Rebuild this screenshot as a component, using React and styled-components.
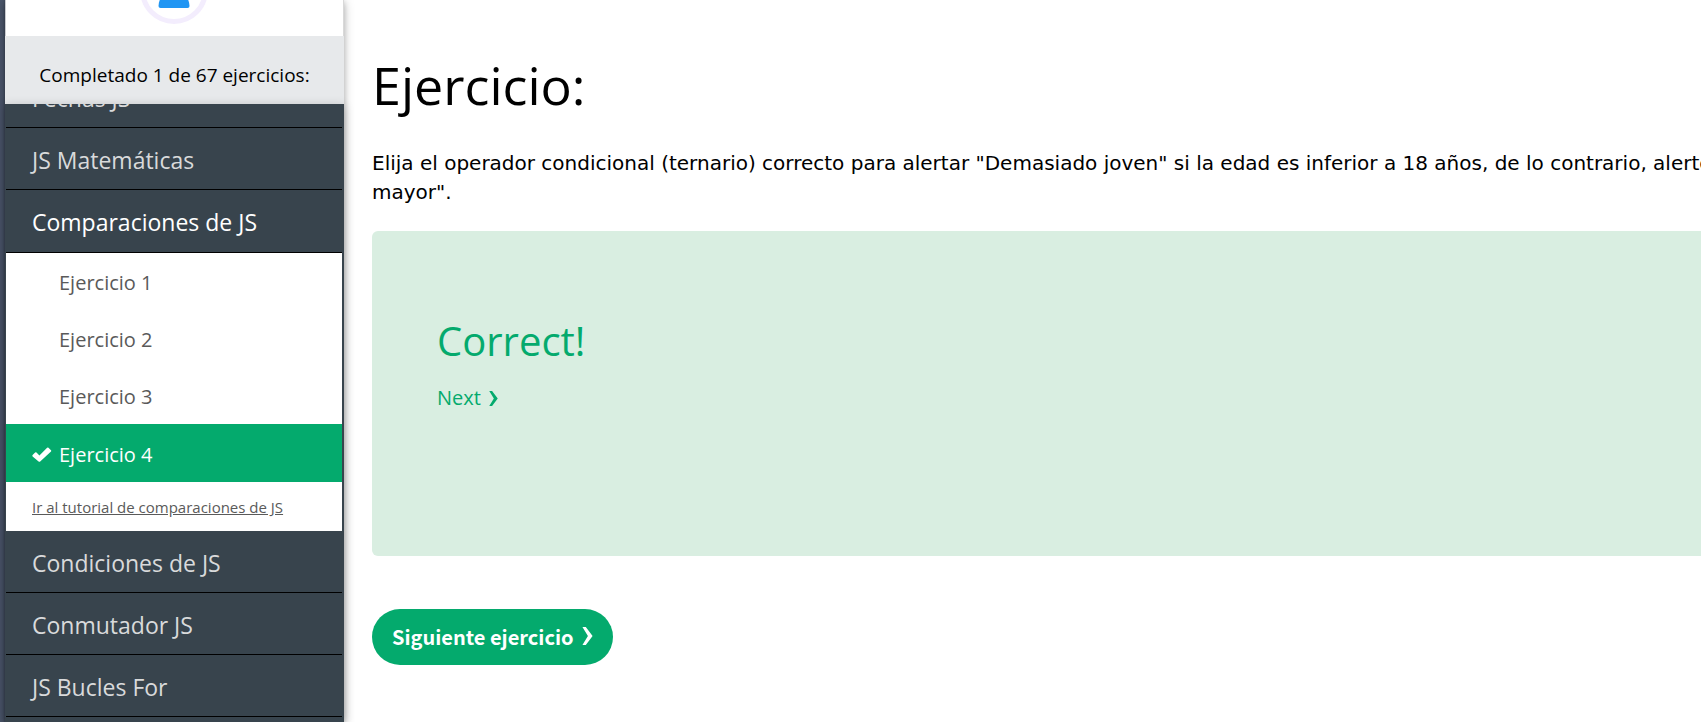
import React from "react";
import styled, { createGlobalStyle, css } from "styled-components";

const ui = '"Open Sans", "Noto Sans", sans-serif';
const green = "#04aa6d";
const slate = "#38444d";

const GlobalStyle = createGlobalStyle`
  *, *::before, *::after { box-sizing: border-box; }
  html, body, #root { height: 100%; }
  body {
    margin: 0;
    background: #fff;
    color: #000;
    font-family: ${ui};
    overflow: hidden;
  }
`;

const Page = styled.div`
  display: flex;
  height: 100%;
  overflow: hidden;
`;

const Edge = styled.div`
  flex: none;
  width: 5px;
  background: linear-gradient(90deg, #4b566b 60%, #434d60);
`;

const Sidebar = styled.aside`
  flex: none;
  display: flex;
  flex-direction: column;
  width: 339px;
  box-shadow: 0 2px 10px rgba(0, 0, 0, 0.26), 0 2px 5px rgba(0, 0, 0, 0.16);
`;

const Profile = styled.div`
  display: flex;
  flex: none;
  justify-content: center;
  align-items: flex-end;
  height: 36px;
  padding: 0 2px 12px 0;
  overflow: hidden;
  border-left: 1px solid #c9cbd0;
  border-right: 1px solid #d9d9d9;
  background: #fff;
`;

const Progress = styled.div`
  flex: none;
  height: 68px;
  padding-top: 23px;
  background: #e7e9eb;
  font-size: 19px;
  line-height: 32px;
  text-align: center;
`;

const Menu = styled.nav`
  flex: 1;
  min-height: 0;
  overflow: hidden;
  padding: 0 2px 0 1px;
  background: ${slate};
  box-shadow: 0 2px 10px rgba(0, 0, 0, 0.2);
`;

/* The list is scrolled part of the way into its first entry. */
const Topics = styled.ul`
  margin: -38px 0 0;
  padding: 0;
  list-style: none;
`;

const Topic = styled.a`
  display: block;
  height: ${(p) => (p.$open ? 63 : 62)}px;
  padding: 16px 26px 0;
  border-bottom: 1px solid #000;
  color: ${(p) => (p.$open ? "#fff" : "#d9dadb")};
  font-size: 23px;
  line-height: 32px;
  text-decoration: none;
`;

const Exercises = styled.ul`
  margin: 0;
  padding: 0;
  background: #fff;
  list-style: none;
`;

const Exercise = styled.a`
  display: flex;
  align-items: center;
  height: 57px;
  padding: 2px 26px 0;
  color: #5a5a5a;
  font-size: 20px;
  text-decoration: none;
  ${(p) =>
    p.$active &&
    css`
      height: 58px;
      background: ${green};
      color: #fff;
    `}
`;

const Mark = styled.span`
  display: flex;
  flex: none;
  width: 27px;
`;

const TutorialLink = styled.a`
  display: block;
  height: 49px;
  padding: 13px 26px 0;
  color: #5a5a5a;
  font-size: 15px;
  line-height: 24px;
`;

const Main = styled.main`
  flex: 1;
  min-width: 0;
  overflow: hidden;
  padding: 47px 0 0 28px;
`;

/* Wider than the window: the content runs on past the right edge. */
const Content = styled.div`
  width: calc(100% + 180px);
`;

const Title = styled.h1`
  margin: 0 0 26px;
  font-size: 52px;
  font-weight: 400;
  line-height: 76px;
`;

const Task = styled.p`
  margin: 0 0 24px;
  font-family: "DejaVu Sans", sans-serif;
  font-size: 20px;
  line-height: 29px;
`;

const Result = styled.section`
  height: 325px;
  padding: 82px 65px 0;
  border-radius: 6px;
  background: #d9eee1;
  color: ${green};
`;

const Verdict = styled.h2`
  margin: 0 0 13px;
  font-size: 40px;
  font-weight: 400;
  line-height: 56px;
`;

const NextLink = styled.a`
  display: inline-flex;
  align-items: center;
  gap: 8px;
  color: ${green};
  font-size: 20px;
  line-height: 32px;
  text-decoration: none;
`;

const NextButton = styled.button`
  display: inline-flex;
  align-items: center;
  gap: 8px;
  height: 56px;
  margin-top: 53px;
  padding: 0 20px 2px;
  border: 0;
  border-radius: 28px;
  background: ${green};
  color: #fff;
  font-family: "Noto Sans CJK SC", ${ui};
  font-size: 20px;
  font-weight: 700;
`;

const Chevron = ({ width, height }) => (
  <svg width={width} height={height} viewBox="0 0 10 17" fill="currentColor" aria-hidden="true">
    <path d="M0.2 0H3.4L9.8 8.5L3.4 17H0.2L5.4 8.5Z" />
  </svg>
);

const Check = () => (
  <svg width="20" height="15" viewBox="0 0 20 15" aria-hidden="true">
    <path
      d="M0.6 8.1L3.1 5.6Q3.8 5 4.5 5.6L7.4 8.5L15.1 0.8Q15.8 0.1 16.5 0.8L19 3.2Q19.6 3.9 19 4.6L8.2 14.4Q7.4 15 6.6 14.4L0.6 9.4Q0 8.8 0.6 8.1Z"
      fill="currentColor"
    />
  </svg>
);

const Avatar = () => (
  <svg width="68" height="68" viewBox="0 0 68 68" aria-hidden="true">
    <circle cx="34" cy="34" r="31.5" fill="#fff" stroke="#f3edfd" strokeWidth="5" />
    <circle cx="34" cy="22" r="11" fill="#2196f3" />
    <path d="M18.5 50C19 42 23 36 34 36S49 42 49.5 50Q49.5 52 47.5 52H20.5Q18.5 52 18.5 50Z" fill="#2196f3" />
  </svg>
);

const exercises = ["Ejercicio 1", "Ejercicio 2", "Ejercicio 3", "Ejercicio 4"];

export default function App() {
  return (
    <Page>
      <GlobalStyle />
      <Edge />
      <Sidebar>
        <Profile>
          <Avatar />
        </Profile>
        <Progress>Completado 1 de 67 ejercicios:</Progress>
        <Menu>
          <Topics>
            <li><Topic href="#fechas">Fechas JS</Topic></li>
            <li><Topic href="#matematicas">JS Matemáticas</Topic></li>
            <li>
              <Topic href="#comparaciones" $open>Comparaciones de JS</Topic>
              <Exercises>
                {exercises.map((name, i) => (
                  <li key={name}>
                    <Exercise href={`#ejercicio-${i + 1}`} $active={i === 3}>
                      <Mark>{i === 3 && <Check />}</Mark>
                      {name}
                    </Exercise>
                  </li>
                ))}
                <li>
                  <TutorialLink href="#tutorial">Ir al tutorial de comparaciones de JS</TutorialLink>
                </li>
              </Exercises>
            </li>
            <li><Topic href="#condiciones">Condiciones de JS</Topic></li>
            <li><Topic href="#conmutador">Conmutador JS</Topic></li>
            <li><Topic href="#bucles">JS Bucles For</Topic></li>
          </Topics>
        </Menu>
      </Sidebar>
      <Main>
        <Content>
          <Title>Ejercicio:</Title>
          <Task>
            Elija el operador condicional (ternario) correcto para alertar "Demasiado joven" si la
            edad es inferior a 18 años, de lo contrario, alerte "Demasiado mayor".
          </Task>
          <Result>
            <Verdict>Correct!</Verdict>
            <NextLink href="#siguiente">
              Next <Chevron width="9" height="15" />
            </NextLink>
          </Result>
          <NextButton type="button">
            Siguiente ejercicio <Chevron width="11" height="18" />
          </NextButton>
        </Content>
      </Main>
    </Page>
  );
}
